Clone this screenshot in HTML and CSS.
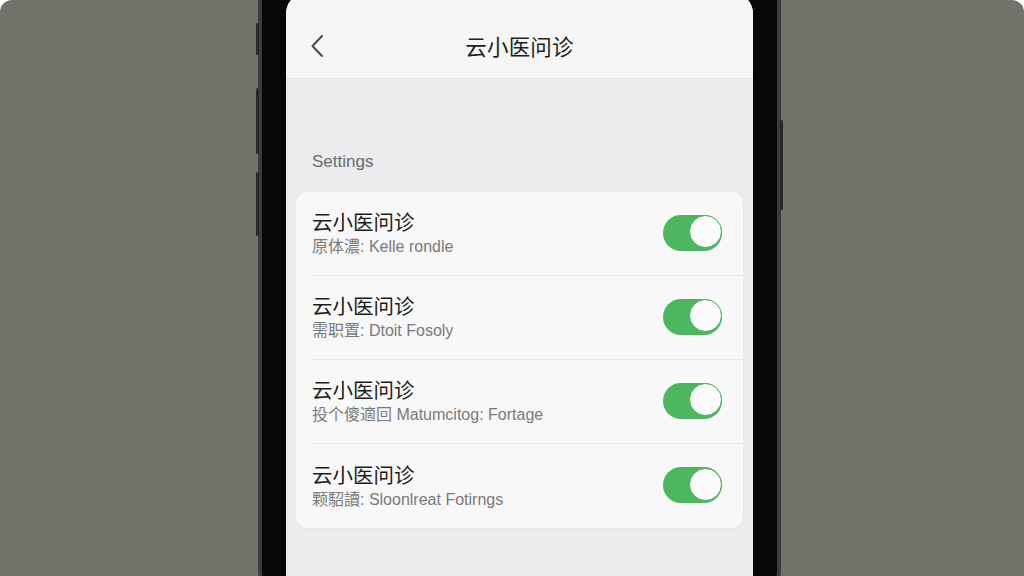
FILE: index.html
```html
<!DOCTYPE html>
<html lang="zh-CN">
<head>
  <meta charset="UTF-8">
  <title>云小医问诊 - Settings</title>
  <meta name="viewport" content="width=device-width, initial-scale=1">
  <link rel="stylesheet" href="styles.css">
</head>
<body>
  <div class="stage">
    <div class="phone">
      <span class="side-btn btn-l1"></span>
      <span class="side-btn btn-l2"></span>
      <span class="side-btn btn-l3"></span>
      <span class="side-btn btn-r1"></span>

      <div class="screen">
        <header class="topbar">
          <svg class="back" width="14" height="24" viewBox="0 0 14 24">
            <path d="M12 2 L2.5 12 L12 22" fill="none" stroke="#4a4a4a" stroke-width="2" stroke-linecap="round" stroke-linejoin="round"/>
          </svg>
          <h1>云小医问诊</h1>
          <span></span>
        </header>

        <main class="content">
          <div class="section-label">Settings</div>
          <div class="card">
            <div class="row">
              <div class="text">
                <div class="title">云小医问诊</div>
                <div class="sub">原体濃: Kelle rondle</div>
              </div>
              <span class="toggle"></span>
            </div>
            <div class="row">
              <div class="text">
                <div class="title">云小医问诊</div>
                <div class="sub">需职置: Dtoit Fosoly</div>
              </div>
              <span class="toggle"></span>
            </div>
            <div class="row">
              <div class="text">
                <div class="title">云小医问诊</div>
                <div class="sub">投个傻適回 Matumcitog: Fortage</div>
              </div>
              <span class="toggle"></span>
            </div>
            <div class="row">
              <div class="text">
                <div class="title">云小医问诊</div>
                <div class="sub">颗駋讀: Sloonlreat Fotirngs</div>
              </div>
              <span class="toggle"></span>
            </div>
          </div>
        </main>
      </div>
    </div>
  </div>
</body>
</html>
```

FILE: styles.css
```css
html, body {
  margin: 0;
  background: #ffffff;
  font-family: "Liberation Sans", "Noto Sans CJK SC", sans-serif;
}

.stage {
  height: 576px;
  background: #74736b;
  border-radius: 12px 12px 0 0;
  overflow: hidden;
}

.phone {
  position: relative;
  width: 523px;
  height: 640px;
  box-sizing: border-box;
  margin: -30px 0 0 258px;
  padding: 22px 24px 0;
  background: #070707;
  border: 4px solid #3c3c3a;
  border-top: 0;
  border-radius: 0 0 40px 40px;
}

.side-btn {
  position: absolute;
  width: 3px;
  background: #2a2a2a;
  border-radius: 2px;
}

.btn-l1 { left: -6px; top: 53px; height: 32px; }
.btn-l2 { left: -6px; top: 118px; height: 66px; }
.btn-l3 { left: -6px; top: 202px; height: 64px; }
.btn-r1 { right: -6px; top: 150px; height: 90px; }

.screen {
  height: 100%;
  background: #ececee;
  border-radius: 22px 22px 0 0;
  overflow: hidden;
}

.topbar {
  height: 87px;
  box-sizing: border-box;
  padding: 21px 0 0 24px;
  background: #f6f6f6;
  border-bottom: 1px solid #e2e2e4;
  display: grid;
  grid-template-columns: 1fr auto 1fr;
  align-items: center;
}

.back {
  display: block;
}

.topbar h1 {
  margin: 0 0 0 -24px;
  font-family: "Noto Sans CJK SC", sans-serif;
  font-size: 21.5px;
  font-weight: 400;
  color: #1f1f1f;
  letter-spacing: 0.2px;
}

.content {
  padding: 73px 10px 0;
}

.section-label {
  padding-left: 16px;
  font-size: 17px;
  line-height: 20px;
  color: #6a6a6c;
  margin-bottom: 20px;
}

.card {
  background: #f8f8f8;
  border-radius: 11px;
  box-shadow: 0 1px 3px rgba(0, 0, 0, 0.04);
}

.row {
  height: 84px;
  box-sizing: border-box;
  margin-left: 16px;
  padding-right: 21px;
  display: flex;
  align-items: center;
  justify-content: space-between;
  border-bottom: 1px solid #e6e6e8;
}

.row:last-child {
  border-bottom: none;
}

.text {
  display: flex;
  flex-direction: column;
  gap: 4px;
  margin-top: -1px;
}

.title {
  font-family: "Noto Sans CJK SC", sans-serif;
  font-size: 20.5px;
  line-height: 24px;
  color: #1c1c1c;
}

.sub {
  font-size: 16px;
  line-height: 20px;
  color: #7a7a7a;
}

.toggle {
  position: relative;
  width: 59px;
  height: 36px;
  margin-top: -2px;
  border-radius: 18px;
  background: #4db760;
}

.toggle::after {
  content: "";
  position: absolute;
  right: 1px;
  top: 1px;
  width: 31px;
  height: 31px;
  border-radius: 50%;
  background: #fbfbfb;
  border: 1.5px solid #46ad58;
  box-sizing: content-box;
  margin: -0.5px;
}
```
